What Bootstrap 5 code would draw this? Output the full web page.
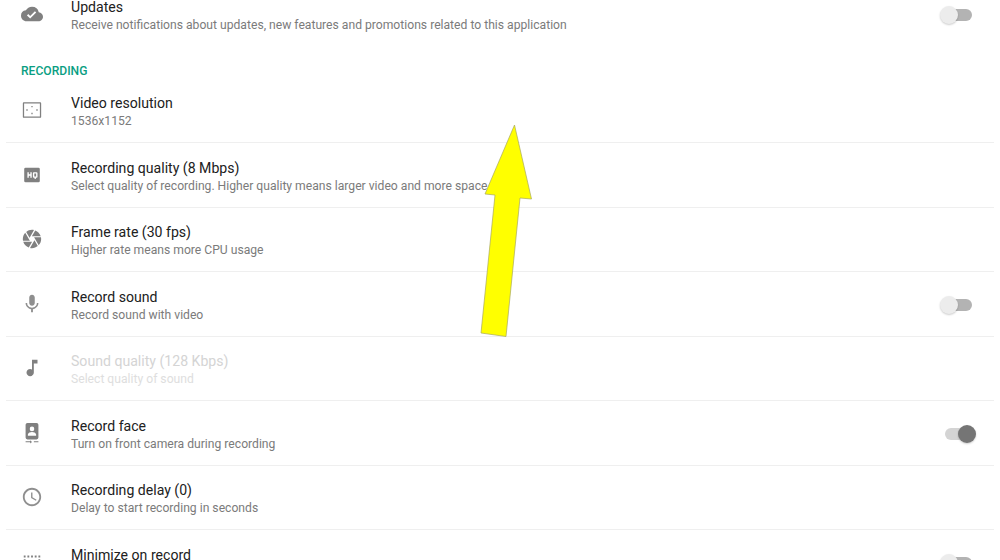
<!DOCTYPE html>
<html lang="en">
<head>
<meta charset="utf-8">
<title>Settings</title>
<link rel="stylesheet" href="https://cdn.jsdelivr.net/npm/bootstrap@5.3.0/dist/css/bootstrap.min.css">
<style>
html,body{height:560px;overflow:hidden;background:#fff;font-family:Roboto,sans-serif}
.stage{position:relative;height:560px;overflow:hidden;padding:0 6px}
.pref-list{margin-top:-17.5px}
.pref-row{height:64.5px;border-bottom:1px solid #efefef}
.pref-row.no-line{border-bottom:0}
.pref-first{height:63px;border-bottom:0;margin-bottom:18px}
.pref-ico{width:53px;padding:0 0 0 15px;flex:none;line-height:0}
.pref-ico svg{width:22px;height:22px;fill:#808080}
.pref-ico svg.thin{fill:#8f8f8f}
.pref-txt{flex:1;padding-left:12px;padding-top:4px}
.pref-title{font-size:14.1px;line-height:18px;color:#212121;margin-bottom:1px}
.pref-sub{font-size:12.15px;line-height:17px;color:#7b7b7b;min-height:17px}
.pref-off .pref-title{color:#d4d4d4}
.pref-off .pref-sub{color:#dedede}
.cat-head{font-size:12.1px;font-weight:500;color:#0a9e82;height:15px;line-height:15px;padding-left:15px}
.tog{position:relative;width:27px;height:12px;border-radius:6px;background:#b3b3b3;margin:2px 22px 0 0;flex:none}
.tog::after{content:"";position:absolute;left:-5px;top:-3px;width:18px;height:18px;border-radius:50%;background:#ececec;box-shadow:0 1px 2px rgba(0,0,0,.2)}
.tog.on{background:#d4d4d4}
.tog.on::after{left:13px;background:#757575}
.arrow{position:absolute;left:0;top:0;pointer-events:none}
</style>
</head>
<body>
<div class="stage">
  <div class="pref-list">
    <div class="d-flex align-items-center pref-first">
      <div class="pref-ico"><svg viewBox="0 0 24 24"><path d="M19.35 10.04A7.49 7.49 0 0 0 12 4C9.11 4 6.6 5.64 5.35 8.04A5.994 5.994 0 0 0 0 14c0 3.31 2.69 6 6 6h13c2.76 0 5-2.24 5-5 0-2.64-2.05-4.78-4.65-4.96zM10 17l-3.5-3.5 1.41-1.41L10 14.17l5.18-5.18 1.41 1.41L10 17z"/></svg></div>
      <div class="pref-txt"><div class="pref-title">Updates</div><div class="pref-sub">Receive notifications about updates, new features and promotions related to this application</div></div>
      <div class="tog"></div>
    </div>
    <div class="cat-head">RECORDING</div>
    <div class="d-flex align-items-center pref-row">
      <div class="pref-ico"><svg viewBox="0 0 24 24"><path fill-rule="evenodd" d="M3 3.500h18a1 1 0 0 1 1 1v15a1 1 0 0 1-1 1H3a1 1 0 0 1-1-1v-15a1 1 0 0 1 1-1zm.4 1.400v14.200h17.200V4.900z"/><path d="M11.300 7.500h1.400v1.500h-1.400zM11.300 15h1.400v1.500h-1.400zM5.800 11.300h1.500v1.400H5.800zM16.700 11.300h1.500v1.400h-1.500z"/></svg></div>
      <div class="pref-txt"><div class="pref-title">Video resolution</div><div class="pref-sub">1536x1152</div></div>
    </div>
    <div class="d-flex align-items-center pref-row">
      <div class="pref-ico"><svg viewBox="0 0 24 24"><path fill-rule="evenodd" d="M5 4h14a1.500 1.500 0 0 1 1.500 1.500v13A1.500 1.500 0 0 1 19 20H5a1.500 1.500 0 0 1-1.500-1.500v-13A1.500 1.500 0 0 1 5 4zM7 9v6h1.500v-2.300h1.700V15h1.500V9h-1.500v2.300H8.500V9zm7 0a1 1 0 0 0-1 1v4a1 1 0 0 0 1 1h.8v1.300h1.400V15h.8a1 1 0 0 0 1-1v-4a1 1 0 0 0-1-1zm.5 1.400h2v3.200h-2z"/></svg></div>
      <div class="pref-txt"><div class="pref-title">Recording quality (8 Mbps)</div><div class="pref-sub">Select quality of recording. Higher quality means larger video and more space</div></div>
    </div>
    <div class="d-flex align-items-center pref-row">
      <div class="pref-ico"><svg viewBox="0 0 24 24"><path d="M9.400 10.500l4.770-8.260C13.470 2.090 12.750 2 12 2c-2.400 0-4.600.85-6.320 2.260l3.660 6.340.06-.1zM21.540 9c-.92-2.920-3.150-5.260-6-6.340L11.880 9h9.660zm.26 1h-7.490l.29.500 4.760 8.250C21 16.970 22 14.610 22 12c0-.69-.07-1.350-.2-2zM8.540 12l-3.900-6.750C3.010 7.030 2 9.390 2 12c0 .69.07 1.350.2 2h7.490l-1.150-2zm-6.080 3c.92 2.920 3.150 5.260 6 6.340L12.120 15H2.460zm11.270 0l-3.900 6.760c.7.150 1.420.24 2.170.24 2.400 0 4.600-.85 6.320-2.260l-3.660-6.340-.93 1.600z"/></svg></div>
      <div class="pref-txt"><div class="pref-title">Frame rate (30 fps)</div><div class="pref-sub">Higher rate means more CPU usage</div></div>
    </div>
    <div class="d-flex align-items-center pref-row">
      <div class="pref-ico"><svg class="thin" viewBox="0 0 24 24"><path d="M12 14c1.660 0 3-1.340 3-3V5c0-1.660-1.340-3-3-3S9 3.340 9 5v6c0 1.660 1.340 3 3 3zm5.300-3c0 3-2.540 5.100-5.300 5.100S6.700 14 6.700 11H5c0 3.410 2.720 6.230 6 6.720V21h2v-3.280c3.280-.48 6-3.300 6-6.720h-1.700z"/></svg></div>
      <div class="pref-txt"><div class="pref-title">Record sound</div><div class="pref-sub">Record sound with video</div></div>
      <div class="tog"></div>
    </div>
    <div class="d-flex align-items-center pref-row pref-off">
      <div class="pref-ico"><svg viewBox="0 0 24 24"><path d="M12 3v10.550c-.59-.34-1.270-.55-2-.55-2.210 0-4 1.790-4 4s1.790 4 4 4 4-1.790 4-4V7h4V3h-6z"/></svg></div>
      <div class="pref-txt"><div class="pref-title">Sound quality (128 Kbps)</div><div class="pref-sub">Select quality of sound</div></div>
    </div>
    <div class="d-flex align-items-center pref-row">
      <div class="pref-ico"><svg viewBox="0 0 24 24"><path fill-rule="evenodd" d="M7 1h10a2 2 0 0 1 2 2v14a2 2 0 0 1-2 2H7a2 2 0 0 1-2-2V3a2 2 0 0 1 2-2zm5 4a2.500 2.500 0 1 0 0 5 2.500 2.500 0 0 0 0-5zM7.500 15h9v-1.500c0-1.800-3-2.700-4.500-2.700s-4.500.9-4.500 2.700zM5 21h5v-1l2 1.700-2 1.700V22H5zm9 0h5v1h-5z"/></svg></div>
      <div class="pref-txt"><div class="pref-title">Record face</div><div class="pref-sub">Turn on front camera during recording</div></div>
      <div class="tog on"></div>
    </div>
    <div class="d-flex align-items-center pref-row">
      <div class="pref-ico"><svg class="thin" viewBox="0 0 24 24"><path d="M11.990 2C6.470 2 2 6.480 2 12s4.470 10 9.990 10C17.520 22 22 17.520 22 12S17.520 2 11.990 2zM12 20c-4.420 0-8-3.580-8-8s3.580-8 8-8 8 3.580 8 8-3.580 8-8 8zm.5-13H11v6l5.250 3.150.75-1.230-4.500-2.670z"/></svg></div>
      <div class="pref-txt"><div class="pref-title">Recording delay (0)</div><div class="pref-sub">Delay to start recording in seconds</div></div>
    </div>
    <div class="d-flex align-items-center pref-row no-line">
      <div class="pref-ico"><svg viewBox="0 0 24 24"><path d="M3 9h2v2H3zM3 5h2v2H3zM7 5h2v2H7zM11 5h2v2h-2zM15 5h2v2h-2zM19 5h2v2h-2zM19 9h2v2h-2zM3 13h2v2H3zM19 13h2v2h-2zM3 17h18v2H3z"/></svg></div>
      <div class="pref-txt"><div class="pref-title">Minimize on record</div><div class="pref-sub"></div></div>
      <div class="tog"></div>
    </div>
  </div>
  <svg class="arrow" width="1000" height="560" viewBox="0 0 1000 560"><polygon points="514.500,125 531.500,199 520,198 506,336.500 481,333 495,195 485,194" fill="#ffff00" stroke="#a8a860" stroke-width="0.7"/></svg>
</div>
<script src="https://cdn.jsdelivr.net/npm/bootstrap@5.3.0/dist/js/bootstrap.bundle.min.js"></script>
</body>
</html>
